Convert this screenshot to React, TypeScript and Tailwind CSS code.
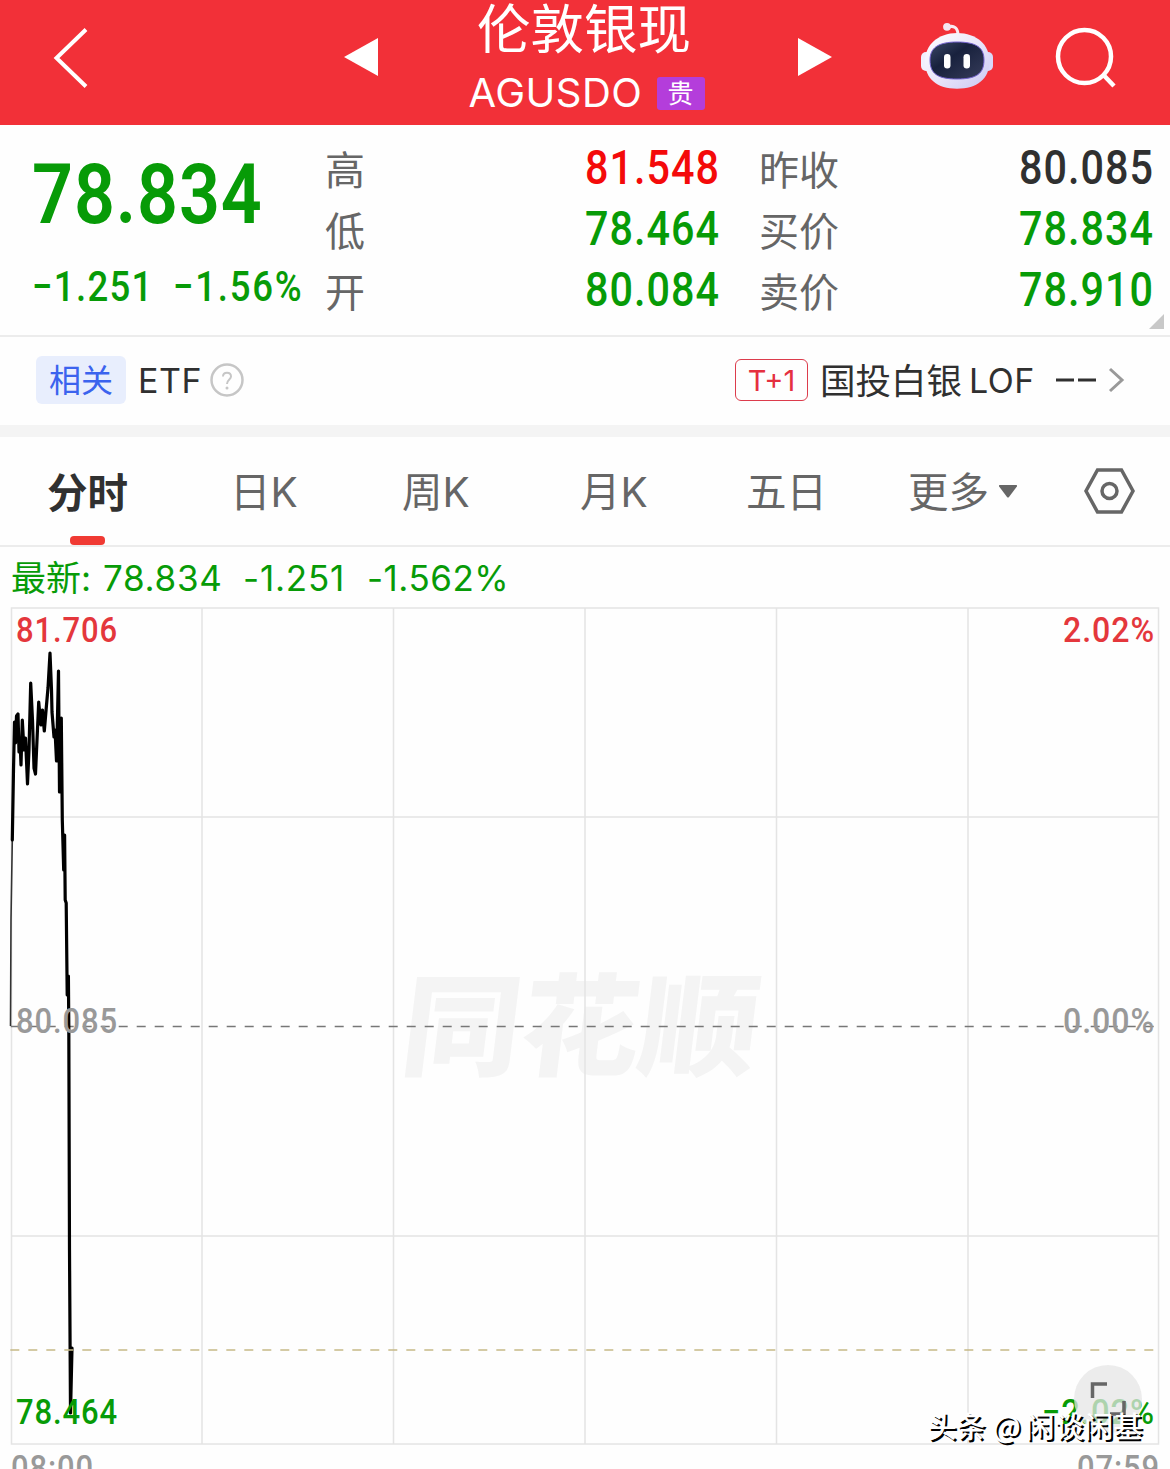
import React from "react";
import clsx from "clsx";

const GREEN = "text-[#079b07]";

const tabs = [
	{ label: "日K", className: "w-[70px] ml-[101px]" },
	{ label: "周K", className: "w-[72px] ml-[102px]" },
	{ label: "月K", className: "w-[72px] ml-[106px]" },
	{ label: "五日", className: "w-[80px] ml-[94px]" },
];

const quotes = [
	{ label: "高", value: "81.548", color: "text-[#f40a0a]", label2: "昨收", value2: "80.085", color2: "text-[#303030]" },
	{ label: "低", value: "78.464", color: GREEN, label2: "买价", value2: "78.834", color2: GREEN },
	{ label: "开", value: "80.084", color: GREEN, label2: "卖价", value2: "78.910", color2: GREEN },
];

const pricePoints =
	"12.3,840 13.5,770 14.5,722 15.5,743 16.5,716 18,714 19,752 20,740 21,765 22.3,720 24,750 25.5,738 27.5,784 29,750 30.7,683 32.5,720 34,768 35.5,774 38.7,702 40,716 41,725 42.5,710 44.3,731 46.5,705 48,688 50,653 51.500,690 52,712 54,737 55,730 56.5,761 58.5,671 59.5,792 61.3,718 62.3,820 63.7,870 64.6,835 65.2,900 66.2,903 67.2,995 68.4,976 68.8,1026 69.5,1250 70.5,1413 72,1348";

export default function App() {
	return (
		<div className="w-[1170px] h-[1469px] overflow-hidden bg-[#fefefe] font-['Inter','Noto_Sans_CJK_SC',sans-serif] text-[#303030]">
			<Header />
			<QuotePanel />
			<RelatedBar />
			<PeriodTabs />
			<div className={clsx("flex h-[60px] items-center pt-[2px] pl-[11px] text-[35px] leading-[60px] whitespace-pre", GREEN)}>
				<span className="w-[92px]">最新:</span>
				<span className="w-[140px] tracking-[.7px]">78.834</span>
				<span className="w-[124px] tracking-[.8px]">-1.251</span>
				<span className="tracking-[.5px]">-1.562%</span>
			</div>
			<Chart />
		</div>
	);
}

const Header = () => {
	return (
		<div className="flex h-[125px] bg-[#f23038] text-white">
			<svg className="ml-[50px] mt-[24px]" width="40" height="68" viewBox="50 24 40 68" fill="none" stroke="white" strokeWidth="4">
				<path d="M86 29.500L56.500 58L86 86.500" />
			</svg>
			<svg className="ml-[254px] mt-[36px]" width="34" height="42" viewBox="0 0 34 42" fill="white">
				<path d="M34 2V40L0 21Z" />
			</svg>
			<div className="w-[420px] flex flex-col items-center">
				<div className="h-[60px] w-[222px] text-[53.5px] leading-[59px] whitespace-nowrap">伦敦银现</div>
				<div className="flex h-[65px] items-center pr-[3px]">
					<span className="w-[188px] text-[40px] leading-[65px] tracking-[.5px]">AGUSDO</span>
					<span className="mt-[1px] h-[33px] w-[48px] rounded-[3px] bg-[#b43ddb] text-center text-[26px] leading-[34px]">贵</span>
				</div>
			</div>
			<svg className="mt-[36px]" width="34" height="42" viewBox="0 0 34 42" fill="white">
				<path d="M0 2V40L34 21Z" />
			</svg>
			<RobotIcon />
			<svg className="ml-[60px] mt-[24px]" width="66" height="68" viewBox="1053 24 66 68" fill="none" stroke="white" strokeWidth="4.500">
				<circle cx="1084.500" cy="56.500" r="26.500" />
				<path d="M1103.500 75L1114 86" />
			</svg>
		</div>
	);
};

const RobotIcon = () => {
	return (
		<svg className="ml-[86px] mt-[20px]" width="75" height="72" viewBox="918 20 75 72">
			<defs>
				<linearGradient id="shell" x1="0" y1="0" x2="1" y2="1">
					<stop offset="0" stopColor="#ffffff" />
					<stop offset=".5" stopColor="#ebe6fa" />
					<stop offset="1" stopColor="#c9c8f2" />
				</linearGradient>
				<linearGradient id="visor" x1="0" y1="0" x2="1" y2="1">
					<stop offset="0" stopColor="#3b4866" />
					<stop offset=".4" stopColor="#18213d" />
					<stop offset="1" stopColor="#363c5a" />
				</linearGradient>
			</defs>
			<path d="M948 27C954 25 958 28 958 35" fill="none" stroke="#f9eaf2" strokeWidth="3" />
			<circle cx="947" cy="26.800" r="3.900" fill="#f4e6f2" />
			<rect x="921" y="52" width="12" height="19" rx="5" fill="#f1effc" />
			<rect x="981" y="52" width="12" height="19" rx="5" fill="#d9d8f8" />
			<path d="M957 33C977 33 989.500 45 989.500 61C989.500 79 977 88.700 957 88.700C937 88.700 925 79 925 61C925 45 938 33 957 33Z" fill="url(#shell)" />
			<path d="M957 42C977 42 984 48 984 60C984 74 976 79 957 79C938 79 930 74 930 60C930 48 938 42 957 42Z" fill="url(#visor)" stroke="#7463cf" strokeWidth="1" />
			<rect x="944" y="54" width="6.500" height="14.500" rx="3.200" fill="white" />
			<rect x="963.500" y="54" width="6.500" height="14.500" rx="3.200" fill="white" />
		</svg>
	);
};

const QuotePanel = () => {
	return (
		<div className="relative flex h-[212px] border-b-2 border-[#ececec]">
			<div className="w-[325px] pl-[32px]">
				<div className={clsx("mt-[28px] h-[83px] origin-left scale-x-[.865] font-['Roboto'] text-[83px] font-semibold leading-[83px] tracking-[1px]", GREEN)}>
					78.834
				</div>
				<div className={clsx("mt-[26px] flex origin-left scale-x-[.87] font-['Roboto'] text-[42px] font-medium leading-[50px] whitespace-nowrap", GREEN)}>
					<span className="w-[162px] shrink-0 tracking-[1.5px]">−1.251</span>
					<span className="shrink-0 tracking-[2px]">−1.56%</span>
				</div>
			</div>
			<div className="pt-[14px]">
				{quotes.map((row) => (
					<div key={row.label} className="flex h-[61px] items-center whitespace-nowrap">
						<span className="w-[195px] pt-[3px] text-[40px] leading-[58px] text-[#666]">{row.label}</span>
						<Price className={clsx("w-[200px]", row.color)}>{row.value}</Price>
						<span className="ml-[39px] w-[195px] pt-[3px] text-[40px] leading-[58px] text-[#666]">{row.label2}</span>
						<Price className={clsx("w-[200px]", row.color2)}>{row.value2}</Price>
					</div>
				))}
			</div>
			<svg className="absolute right-[6px] bottom-[6px]" width="15" height="15" fill="#c8c8c8">
				<path d="M15 0V15H0Z" />
			</svg>
		</div>
	);
};

const Price = ({ className, children }: { className?: string; children: React.ReactNode }) => {
	return (
		<span className={clsx("mb-[4px] origin-right scale-x-[.86] text-right font-['Roboto'] text-[48px] font-medium leading-[54px] tracking-[1.2px]", className)}>
			{children}
		</span>
	);
};

const RelatedBar = () => {
	return (
		<div className="flex h-[100px] items-center border-b-[12px] border-[#f4f4f4] pb-[2px] pl-[36px] text-[34px] whitespace-nowrap">
			<span className="h-[48px] w-[90px] rounded-[6px] bg-[#e8eefd] text-center text-[32px] leading-[49px] text-[#3b63ee]">相关</span>
			<span className="ml-[12px] w-[71px] tracking-[.5px]">ETF</span>
			<svg width="36" height="36" viewBox="0 0 36 36" fill="none" stroke="#c6c6c6" strokeWidth="2.500">
				<circle cx="18" cy="18" r="15.500" />
				<path d="M14 14.500C14 9.500 22 9.500 22 14.500C22 17.500 18 17.500 18 22" strokeWidth="2" />
				<circle cx="18" cy="26" r="1.500" fill="#c6c6c6" stroke="none" />
			</svg>
			<span className="ml-[490px] h-[42px] w-[73px] rounded-[6px] border-[1.5px] border-[#dc3c4c] text-center text-[29px] leading-[41px] text-[#e5303f]">
				T+1
			</span>
			<span className="ml-[12px] w-[149px] pt-[3px] text-[35.5px]">国投白银</span>
			<span className="w-[86px] tracking-[.5px]">LOF</span>
			<svg width="72" height="30" viewBox="0 0 72 30" fill="none">
				<path d="M1 15H19M23 15H41" stroke="#303030" strokeWidth="3" />
				<path d="M55 4L67 15L55 26" stroke="#999" strokeWidth="3" />
			</svg>
		</div>
	);
};

const PeriodTabs = () => {
	return (
		<div className="flex h-[110px] items-center border-b-2 border-[#ececec] pl-[47px] text-[40.5px] leading-[60px] whitespace-nowrap text-[#666]">
			<div className="relative h-[108px] w-[82px] pt-[3px] font-bold leading-[108px] text-[#303030]">
				分时
				<div className="absolute bottom-0 left-[23px] h-[9px] w-[35px] rounded-[4px] bg-[#f03a33]" />
			</div>
			{tabs.map((tab) => (
				<div key={tab.label} className={clsx("pt-[4px]", tab.className)}>
					{tab.label}
				</div>
			))}
			<div className="ml-[82px] flex w-[176px] items-center">
				<span className="pt-[4px]">更多</span>
				<svg className="ml-[10px]" width="18" height="13" fill="#666">
					<path d="M1 0H17Q19 0 17.500 2L10 12Q9 13 8 12L.500 2Q-1 0 1 0Z" />
				</svg>
			</div>
			<svg width="52" height="46" viewBox="0 0 52 46" fill="none" stroke="#666" strokeWidth="3.500">
				<path d="M13.500 2H37.500L49 23L37.500 44H13.500L2 23Z" />
				<circle cx="25.500" cy="23" r="7.500" />
			</svg>
		</div>
	);
};

const Chart = () => {
	return (
		<svg width="1170" height="862" viewBox="0 607 1170 862" fill="none">
			<text x="398" y="1067" textLength="356" lengthAdjust="spacingAndGlyphs" transform="translate(131 0) skewX(-7)" fill="#f4f4f4" className="font-['Noto_Sans_CJK_SC',sans-serif] text-[111px] font-black">
				同花顺
			</text>

			<g stroke="#e4e4e4" strokeWidth="1.500">
				<rect x="11.500" y="608" width="1147" height="836" />
				<path d="M202 608V1444M393.500 608V1444M585 608V1444M776.500 608V1444M968 608V1444" />
				<path d="M12 817H1158M12 1236H1158" />
			</g>
			<path d="M10.700 1026.500H1158" stroke="#777" strokeWidth="1.500" strokeDasharray="9 9" />

			<path d="M10.500 1026L11 920L12.300 840" stroke="#333" strokeWidth="1.600" />
			<polyline points={pricePoints} stroke="black" strokeWidth="3.200" strokeLinejoin="round" strokeLinecap="round" />
			<path d="M10.300 1350H1156" stroke="#c6b987" strokeWidth="1.500" strokeDasharray="9 9" />

			<g className="font-['Roboto'] text-[35px] font-medium tracking-[1px]">
				<text x="16" y="642" textLength="102" lengthAdjust="spacingAndGlyphs" fill="#e4373c">81.706</text>
				<text x="16" y="1033" textLength="102" lengthAdjust="spacingAndGlyphs" fill="#999">80.085</text>
				<text x="16" y="1424" textLength="102" lengthAdjust="spacingAndGlyphs" fill="#079b07">78.464</text>
				<text x="1063" y="642" textLength="92" lengthAdjust="spacingAndGlyphs" fill="#e4373c">2.02%</text>
				<text x="1063" y="1033" textLength="92" lengthAdjust="spacingAndGlyphs" fill="#999">0.00%</text>
				<text x="1042" y="1424" textLength="113" lengthAdjust="spacingAndGlyphs" fill="#079b07">−2.02%</text>
				<text x="11" y="1480" textLength="83" lengthAdjust="spacingAndGlyphs" fill="#999">08:00</text>
				<text x="1077" y="1480" textLength="83" lengthAdjust="spacingAndGlyphs" fill="#999">07:59</text>
			</g>

			{/* fullscreen button */}
			<circle cx="1108" cy="1399" r="34" fill="#e6e6e6" fillOpacity=".75" />
			<path d="M1092.500 1398V1384H1107M1124 1401V1414H1110" stroke="#666" strokeWidth="3.500" />

			<g className="font-['Noto_Sans_CJK_SC',sans-serif] text-[29px] font-medium">
				<g fill="black">
					<text x="929.500" y="1439.500" textLength="58">头条</text>
					<text x="994.500" y="1439.500">@</text>
					<text x="1027.500" y="1439.500" textLength="117">闲谈闲基</text>
				</g>
				<g fill="white">
					<text x="927.500" y="1437.500" textLength="58">头条</text>
					<text x="992.500" y="1437.500">@</text>
					<text x="1025.500" y="1437.500" textLength="117">闲谈闲基</text>
				</g>
			</g>
		</svg>
	);
};
